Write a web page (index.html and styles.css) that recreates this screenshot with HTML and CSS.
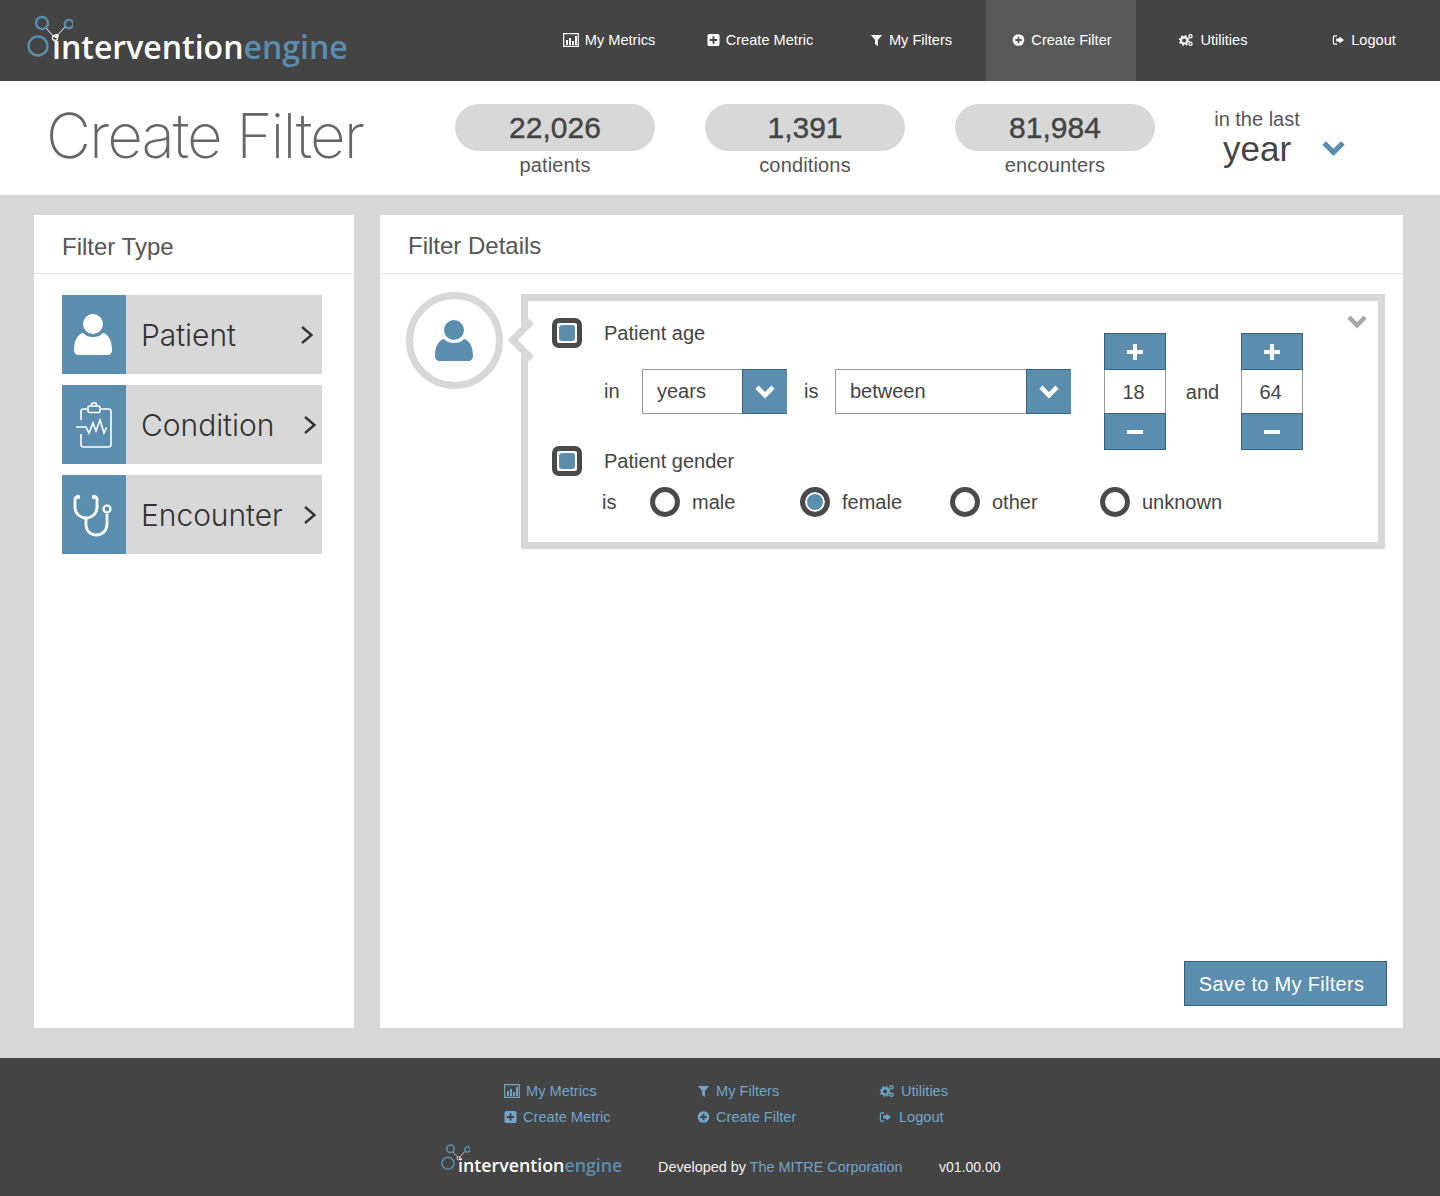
FILE: index.html
```html
<!doctype html>
<html lang="en">
  <head>
    <meta charset="utf-8" />
    <meta name="viewport" content="width=device-width" />
    <title>Intervention Engine - Create Filter</title>
    <link rel="stylesheet" href="styles.css">
  </head>
  <body>
    <svg class="sprites" width="0" height="0" aria-hidden="true">
      <symbol id="i-chart" viewBox="0 0 16 14">
        <path d="M.7.7h14.6v12.6H.7z" fill="none" stroke="currentColor" stroke-width="1.2"/>
        <path d="M3 7h2v5H3zM6 5h2v7H6zM9 8h2v4H9zM12 3h2v9h-2z" fill="currentColor"/>
      </symbol>
      <symbol id="i-plus-square" viewBox="0 0 14 14">
        <path fill-rule="evenodd" fill="currentColor" d="M2.500 .5h9A2 2 0 0 1 13.500 2.500v9a2 2 0 0 1-2 2h-9a2 2 0 0 1-2-2v-9a2 2 0 0 1 2-2zM6 3V6H3v2H6v3h2V8h3V6H8V3z"/>
      </symbol>
      <symbol id="i-filter" viewBox="0 0 14 14">
        <path fill="currentColor" d="M1 1.500h12L8.500 7V13.500L5.500 11.500V7z"/>
      </symbol>
      <symbol id="i-plus-circle" viewBox="0 0 14 14">
        <path fill-rule="evenodd" fill="currentColor" d="M7 .7a6.300 6.300 0 1 1 0 12.600A6.300 6.300 0 0 1 7 .7zM6 3.500V6H3.500v2H6v2.500h2V8h2.500V6H8V3.500z"/>
      </symbol>
      <symbol id="i-cogs" viewBox="0 0 16 15">
        <circle cx="6" cy="8" r="3.300" fill="none" stroke="currentColor" stroke-width="2.200"/>
        <circle cx="6" cy="8" r="5" fill="none" stroke="currentColor" stroke-width="1.600" stroke-dasharray="2 1.930"/>
        <circle cx="12.800" cy="3.500" r="1.700" fill="none" stroke="currentColor" stroke-width="1.400"/>
        <circle cx="12.800" cy="11.500" r="1.700" fill="none" stroke="currentColor" stroke-width="1.400"/>
      </symbol>
      <symbol id="i-logout" viewBox="0 0 14 14">
        <path d="M5.500 2.500H3A1.500 1.500 0 0 0 1.500 4v6A1.500 1.500 0 0 0 3 11.500h2.500" fill="none" stroke="currentColor" stroke-width="1.300"/>
        <path fill="currentColor" d="M8 3.200L13 7l-5 3.800V8.600H4.500V5.400H8z"/>
      </symbol>
      <symbol id="i-person" viewBox="0 0 38 42">
        <circle cx="19" cy="10" r="10" fill="currentColor"/>
        <path fill="currentColor" d="M0 36C0 26 4 20 9 19C12 22 15 23 19 23C23 23 26 22 29 19C34 20 38 26 38 36C38 39 36 41 33 41H5C2 41 0 39 0 36Z"/>
      </symbol>
      <symbol id="i-down" viewBox="0 0 20 14">
        <path d="M2.500 3L10 10.500L17.500 3" fill="none" stroke="currentColor" stroke-width="4.200"/>
      </symbol>
      <symbol id="i-right" viewBox="0 0 14 20">
        <path d="M2 2L11.500 10L2 18" fill="none" stroke="currentColor" stroke-width="2.400"/>
      </symbol>
      <symbol id="i-logo" viewBox="0 0 46 44">
        <path d="M19 14L28 24L38 13" fill="none" stroke="#fff" stroke-width="1"/>
        <circle cx="11" cy="32" r="9.500" fill="none" stroke="#5b8eae" stroke-width="2.400"/>
        <circle cx="15" cy="9" r="6" fill="none" stroke="#5b8eae" stroke-width="2.400"/>
        <circle cx="42" cy="10" r="4.200" fill="none" stroke="#5b8eae" stroke-width="2.400"/>
        <circle cx="28" cy="24" r="2.500" fill="#444" stroke="#fff" stroke-width="1.300"/>
      </symbol>
    </svg>

    <header class="topbar">
      <a class="logo" href="#">
        <svg class="logo-mark"><use href="#i-logo"/></svg>
        <span class="logo-text">intervention<b>engine</b></span>
      </a>
      <nav class="nav">
        <a class="nav-item" href="#"><svg class="ico ico-wide"><use href="#i-chart"/></svg>My Metrics</a>
        <a class="nav-item" href="#"><svg class="ico"><use href="#i-plus-square"/></svg>Create Metric</a>
        <a class="nav-item" href="#"><svg class="ico"><use href="#i-filter"/></svg>My Filters</a>
        <a class="nav-item active" href="#"><svg class="ico"><use href="#i-plus-circle"/></svg>Create Filter</a>
        <a class="nav-item" href="#"><svg class="ico ico-wide"><use href="#i-cogs"/></svg>Utilities</a>
        <a class="nav-item" href="#"><svg class="ico"><use href="#i-logout"/></svg>Logout</a>
      </nav>
    </header>

    <section class="titlebar">
      <h1 class="page-title">Create Filter</h1>
      <div class="stat"><div class="pill">22,026</div><div class="stat-label">patients</div></div>
      <div class="stat"><div class="pill">1,391</div><div class="stat-label">conditions</div></div>
      <div class="stat"><div class="pill">81,984</div><div class="stat-label">encounters</div></div>
      <div class="range">
        <div class="range-text">
          <div class="range-small">in the last</div>
          <div class="range-big">year</div>
        </div>
        <svg class="range-chevron"><use href="#i-down"/></svg>
      </div>
    </section>

    <main class="content">
      <aside class="panel panel-types">
        <h2 class="panel-head">Filter Type</h2>
        <div class="type-list">
          <a class="type-row" href="#">
            <span class="type-icon"><svg class="person-white"><use href="#i-person"/></svg></span>
            <span class="type-name">Patient</span>
            <svg class="type-arrow type-arrow-first"><use href="#i-right"/></svg>
          </a>
          <a class="type-row" href="#">
            <span class="type-icon">
              <svg class="condition-icon" viewBox="0 0 36 46" fill="none" stroke="#fff" stroke-width="1.600">
                <path d="M11 7H7.500Q5 7 5 9.500V18M5 32V42.500Q5 45 7.500 45H32.500Q35 45 35 42.500V9.500Q35 7 32.500 7H25"/>
                <rect x="12" y="4" width="12" height="6.500" rx="1.500"/>
                <path d="M15.500 4V2.500Q15.500 1 17 1H19Q20.500 1 20.500 2.500V4"/>
                <path d="M0 25H10L13 31L17 21L20 29L24 18L28 31L30.500 25.500"/>
              </svg>
            </span>
            <span class="type-name">Condition</span>
            <svg class="type-arrow"><use href="#i-right"/></svg>
          </a>
          <a class="type-row" href="#">
            <span class="type-icon">
              <svg class="stetho-icon" viewBox="0 0 40 44" fill="none" stroke="#fff" stroke-width="2.800">
                <path d="M6 3C3 3 3 4 3 6V13C3 21 10 24 14 24C18 24 25 21 25 13V6C25 4 25 3 22 3"/>
                <path d="M14 24V31C14 36 18 41 24 41C31 41 35 36 35 30V20"/>
                <circle cx="35" cy="15" r="3.500" stroke-width="2.200"/>
                <circle cx="6" cy="3" r="2.200" fill="#fff" stroke="none"/>
                <circle cx="22" cy="3" r="2.200" fill="#fff" stroke="none"/>
              </svg>
            </span>
            <span class="type-name">Encounter</span>
            <svg class="type-arrow"><use href="#i-right"/></svg>
          </a>
        </div>
      </aside>

      <section class="panel panel-details">
        <h2 class="panel-head panel-head-details">Filter Details</h2>
        <div class="details-body">
          <div class="filter-circle"><svg class="person-blue"><use href="#i-person"/></svg></div>
          <div class="filter-box">
            <span class="notch"></span>
            <svg class="collapse"><use href="#i-down"/></svg>

            <div class="check-row row-age">
              <span class="check"></span>
              <span>Patient age</span>
            </div>

            <div class="age-controls">
              <span class="word word-in">in</span>
              <div class="select select-unit"><span class="select-value">years</span><span class="select-btn"><svg><use href="#i-down"/></svg></span></div>
              <span class="word word-is">is</span>
              <div class="select select-op"><span class="select-value">between</span><span class="select-btn"><svg><use href="#i-down"/></svg></span></div>
            </div>

            <div class="steppers">
              <div class="stepper">
                <button class="step-btn" type="button"><span class="plus"></span></button>
                <div class="step-value">18</div>
                <button class="step-btn" type="button"><span class="minus"></span></button>
              </div>
              <span class="word word-and">and</span>
              <div class="stepper">
                <button class="step-btn" type="button"><span class="plus"></span></button>
                <div class="step-value">64</div>
                <button class="step-btn" type="button"><span class="minus"></span></button>
              </div>
            </div>

            <div class="check-row row-gender">
              <span class="check"></span>
              <span>Patient gender</span>
            </div>

            <div class="radios">
              <span class="word word-gender-is">is</span>
              <label class="radio-item"><span class="radio"></span>male</label>
              <label class="radio-item"><span class="radio checked"></span>female</label>
              <label class="radio-item"><span class="radio"></span>other</label>
              <label class="radio-item"><span class="radio"></span>unknown</label>
            </div>
          </div>
        </div>
        <button class="save-btn" type="button">Save to My Filters</button>
      </section>
    </main>

    <footer class="footer">
      <div class="foot-links">
        <a href="#"><svg class="ico ico-wide"><use href="#i-chart"/></svg>My Metrics</a>
        <a href="#"><svg class="ico"><use href="#i-filter"/></svg>My Filters</a>
        <a href="#"><svg class="ico ico-wide"><use href="#i-cogs"/></svg>Utilities</a>
        <a href="#"><svg class="ico"><use href="#i-plus-square"/></svg>Create Metric</a>
        <a href="#"><svg class="ico"><use href="#i-plus-circle"/></svg>Create Filter</a>
        <a href="#"><svg class="ico ico-logout"><use href="#i-logout"/></svg>Logout</a>
      </div>
      <div class="foot-bottom">
        <a class="logo logo-small" href="#">
          <svg class="logo-mark"><use href="#i-logo"/></svg>
          <span class="logo-text">intervention<b>engine</b></span>
        </a>
        <span class="dev">Developed by <a href="#">The MITRE Corporation</a></span>
        <span class="version">v01.00.00</span>
      </div>
    </footer>
  </body>
</html>
```

FILE: styles.css
```css
*, *::before, *::after {
  box-sizing: border-box;
}

html, body {
  margin: 0;
  padding: 0;
}

body {
  display: flex;
  flex-direction: column;
  min-height: 1196px;
  font-family: "Liberation Sans", Arial, sans-serif;
  color: #444;
  background: #d8d8d8;
}

a {
  color: inherit;
  text-decoration: none;
}

.sprites {
  position: absolute;
}

/* top bar */
.topbar {
  display: flex;
  justify-content: space-between;
  height: 81px;
  background: #444;
}

.logo {
  position: relative;
  display: block;
  width: 340px;
  margin-left: 27px;
}

.logo-mark {
  position: absolute;
  left: 0;
  top: 14px;
  width: 46px;
  height: 44px;
}

.logo-text {
  position: absolute;
  left: 25px;
  top: 25px;
  color: #fff;
  font-family: "Open Sans", sans-serif;
  font-size: 32px;
  font-weight: 600;
  line-height: 44px;
  white-space: nowrap;
}

.logo-text b {
  color: #5b8eae;
  font-weight: 600;
}

.nav {
  display: flex;
  gap: 1px;
  margin-right: 2px;
}

.nav-item {
  display: flex;
  align-items: center;
  justify-content: center;
  gap: 6px;
  width: 150px;
  padding: 0 0 2px 2px;
  color: #fff;
  font-size: 14.6px;
}

.nav-item.active {
  background: #585858;
}

.ico {
  width: 13px;
  height: 14px;
  flex: none;
}

.ico-wide {
  width: 16px;
}

/* page title + stats */
.titlebar {
  display: flex;
  align-items: flex-start;
  height: 114px;
  padding-top: 23px;
  padding-left: 46px;
  background: #fff;
}

.page-title {
  width: 409px;
  margin: 0;
  color: #666;
  font-family: Inter, sans-serif;
  font-size: 62px;
  font-weight: 200;
  line-height: 64px;
  letter-spacing: -2px;
  white-space: nowrap;
}

.stat {
  width: 200px;
  margin-right: 50px;
  text-align: center;
}

.pill {
  height: 47px;
  border-radius: 24px;
  background: #d8d8d8;
  font-size: 30px;
  line-height: 47px;
  -webkit-text-stroke: 0.4px #444;
}

.stat-label {
  margin-top: 2px;
  color: #555;
  font-size: 20px;
  line-height: 24px;
  letter-spacing: 0.15px;
}

.range {
  display: flex;
  align-items: flex-end;
  margin-left: 9px;
}

.range-text {
  width: 86px;
  text-align: center;
}

.range-small {
  margin-top: 3px;
  color: #555;
  font-size: 20px;
  line-height: 24px;
}

.range-big {
  font-size: 35px;
  line-height: 36px;
}

.range-chevron {
  width: 25px;
  height: 18px;
  margin-left: 21px;
  margin-bottom: 10px;
  color: #5b8eae;
}

/* main panels */
.content {
  flex: 1;
  display: flex;
  gap: 26px;
  padding: 20px 37px 30px 34px;
}

.panel {
  display: flex;
  flex-direction: column;
  background: #fff;
}

.panel-types {
  width: 320px;
  flex: none;
}

.panel-details {
  flex: 1;
}

.panel-head {
  height: 59px;
  margin: 0;
  padding-left: 28px;
  border-bottom: 1px solid #e2e2e2;
  color: #555;
  font-size: 24px;
  font-weight: 400;
  line-height: 63px;
}

.panel-head-details {
  line-height: 61px;
}

.type-list {
  display: flex;
  flex-direction: column;
  gap: 11px;
  padding: 21px 32px 0 28px;
}

.type-row {
  display: flex;
  align-items: center;
  height: 79px;
  background: #d8d8d8;
  color: #333;
}

.type-icon {
  display: flex;
  align-items: center;
  justify-content: center;
  width: 64px;
  height: 100%;
  flex: none;
  background: #5b8eae;
}

.person-white {
  width: 38px;
  height: 42px;
  margin-right: 2px;
  color: #fff;
}

.condition-icon {
  width: 36px;
  height: 46px;
}

.stetho-icon {
  width: 40px;
  height: 44px;
  margin: 2px 4px 0 0;
}

.type-name {
  flex: 1;
  padding-left: 15px;
  font-family: Inter, sans-serif;
  font-size: 30px;
  font-weight: 300;
  letter-spacing: -0.05px;
}

.type-arrow {
  width: 14px;
  height: 20px;
  margin-right: 5px;
}

.type-arrow-first {
  margin-right: 8px;
}

/* filter details */
.details-body {
  display: flex;
  align-items: flex-start;
  gap: 18px;
  padding: 18px 18px 0 26px;
}

.filter-circle {
  display: flex;
  align-items: center;
  justify-content: center;
  width: 97px;
  height: 97px;
  flex: none;
  border: 7px solid #d8d8d8;
  border-radius: 50%;
}

.person-blue {
  width: 38px;
  height: 42px;
  margin-right: 2px;
  color: #5b8eae;
}

.filter-box {
  position: relative;
  flex: 1;
  display: grid;
  grid-template-columns: 552px auto;
  grid-template-rows: 51px 77px 41px 30px;
  margin-top: 2px;
  padding: 17px 0 25px 24px;
  border: 7px solid #d8d8d8;
  font-size: 20px;
}

.notch {
  position: absolute;
  left: -14px;
  top: 24px;
  width: 30px;
  height: 30px;
  border-left: 7px solid #d8d8d8;
  border-bottom: 7px solid #d8d8d8;
  background: #fff;
  transform: rotate(45deg);
}

.collapse {
  position: absolute;
  right: 10px;
  top: 13px;
  width: 22px;
  height: 15px;
  color: #a8a8a8;
}

.check-row {
  position: relative;
  display: flex;
  align-items: center;
  gap: 22px;
  grid-column: 1;
  height: 30px;
}

.row-age {
  grid-row: 1;
}

.row-gender {
  grid-row: 3;
}

.check {
  width: 30px;
  height: 30px;
  flex: none;
  padding: 2px;
  border: 5px solid #4a4a4a;
  border-radius: 7px;
  background: #fff;
}

.check::after {
  content: "";
  display: block;
  height: 100%;
  border-radius: 3px;
  background: #5b8eae;
}

.age-controls {
  display: flex;
  align-items: center;
  grid-column: 1;
  grid-row: 2;
  height: 45px;
  padding-left: 52px;
}

.word-in {
  width: 38px;
}

.word-is {
  width: 31px;
  margin-left: 17px;
}

.select {
  display: flex;
  height: 45px;
  border: 1px solid #999;
  background: #fff;
}

.select-unit {
  width: 145px;
}

.select-op {
  width: 236px;
}

.select-value {
  flex: 1;
  padding-left: 14px;
  line-height: 42px;
}

.select-btn {
  display: flex;
  align-items: center;
  justify-content: center;
  width: 45px;
  margin: -1px;
  border: 1px solid #34607c;
  border-right-color: #5b8eae;
  background: #5b8eae;
  color: #fff;
}

.select-btn svg {
  width: 22px;
  height: 15px;
}

.steppers {
  display: flex;
  align-items: center;
  grid-column: 2;
  grid-row: 1 / 4;
  align-self: start;
  margin-top: 15px;
}

.stepper {
  display: flex;
  flex-direction: column;
  width: 62px;
}

.step-btn {
  display: flex;
  align-items: center;
  justify-content: center;
  height: 37px;
  padding: 0;
  border: 1px solid #34607c;
  border-radius: 0;
  background: #5b8eae;
}

.step-value {
  height: 43px;
  padding-right: 3px;
  border-left: 1px solid #999;
  border-right: 1px solid #999;
  line-height: 44px;
  text-align: center;
}

.word-and {
  width: 75px;
  padding-top: 2px;
  padding-right: 2px;
  text-align: center;
}

.plus, .minus {
  position: relative;
  display: block;
  width: 16px;
  height: 4px;
  background: #fff;
}

.plus::after {
  content: "";
  position: absolute;
  left: 6px;
  top: -6px;
  width: 4px;
  height: 16px;
  background: #fff;
}

.radios {
  display: flex;
  align-items: center;
  grid-column: 1 / 3;
  grid-row: 4;
  height: 30px;
  padding-left: 50px;
}

.word-gender-is {
  width: 48px;
}

.radio-item {
  display: flex;
  align-items: center;
  gap: 12px;
  width: 150px;
}

.radio {
  width: 30px;
  height: 30px;
  border: 5px solid #4a4a4a;
  border-radius: 50%;
  background: #fff;
}

.radio.checked {
  background: #5b8eae;
  box-shadow: inset 0 0 0 2px #fff;
}

.save-btn {
  align-self: flex-end;
  width: 203px;
  height: 45px;
  margin: auto 16px 22px 0;
  padding: 2px 8px 0 0;
  border: 1px solid #34607c;
  border-radius: 0;
  background: #5b8eae;
  color: #fff;
  font-family: "Liberation Sans", Arial, sans-serif;
  font-size: 20px;
  letter-spacing: 0.3px;
}

/* footer */
.footer {
  height: 138px;
  padding-top: 20px;
  background: #444;
  color: #f2f2f2;
  font-size: 14.4px;
}

.foot-links {
  display: grid;
  grid-template-columns: 193px 182px 160px;
  grid-auto-rows: 26px;
  padding-left: 504px;
  color: #71a6c9;
  font-size: 14.6px;
}

.foot-links a {
  display: flex;
  align-items: center;
  gap: 6px;
}

.foot-links .ico-logout {
  margin-right: 1px;
}

.foot-bottom {
  display: flex;
  align-items: flex-end;
  height: 46px;
  padding-left: 441px;
  line-height: 18px;
}

.logo-small {
  width: 217px;
  height: 46px;
  margin-left: 0;
}

.logo-small .logo-mark {
  left: 0;
  top: 13px;
  width: 29px;
  height: 28px;
}

.logo-small .logo-text {
  left: 17px;
  top: 22px;
  font-size: 17.8px;
  line-height: 26px;
}

.dev {
  width: 281px;
}

.dev a {
  color: #71a6c9;
}

.version {
  font-size: 14px;
}
```
